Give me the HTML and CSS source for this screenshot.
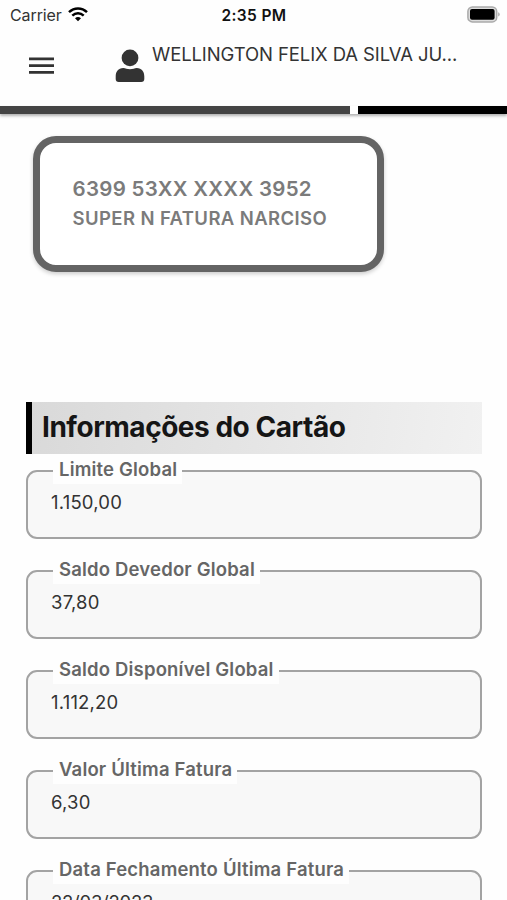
FILE: index.html
```html
<!DOCTYPE html>
<html lang="pt-BR">
<head>
<meta charset="utf-8">
<meta name="viewport" content="width=device-width, initial-scale=1">
<title>Informações do Cartão</title>
<link rel="stylesheet" href="styles.css">
</head>
<body>
<div class="screen">
  <div class="status">
    <div class="carrier"><span>Carrier</span>
      <svg class="wifi" width="20" height="15" viewBox="0 0 20 15" fill="none" stroke="#000" stroke-width="2.5"><path d="M1 5.1C6.2 .2 13.8 .2 19 5.1"/><path d="M4.3 8.6C7.6 5.5 12.4 5.5 15.7 8.6"/><path d="M7 11.2Q10 8.8 13 11.2L10 14.3Z" fill="#000" stroke="none"/></svg>
    </div>
    <div class="clock">2:35 PM</div>
    <svg class="battery" width="33" height="17" viewBox="0 0 33 17"><rect x=".9" y=".9" width="28.8" height="15" rx="4.5" fill="#ddd" stroke="#aaa" stroke-width="1.5"/><rect x="3" y="3" width="24.6" height="10.8" rx="2" fill="#000"/><path d="M31.2 6.3q1.5.6 1.5 2.1t-1.5 2.1z" fill="#aaa"/></svg>
  </div>
  <header class="topbar">
    <svg class="menu" width="25" height="18" viewBox="0 0 25 18" fill="#333"><path d="M0 .5h25v2.7H0zM0 7.3h25V10H0zM0 14.1h25v2.7H0z"/></svg>
    <svg class="user" width="30" height="34" viewBox="0 0 30 34" fill="#333"><circle cx="15" cy="8.9" r="8.4"/><path d="M8.3 19C10.5 19 12 20.3 15 20.3S19.500 19 21.700 19C26.800 19 29.300 22.600 29.300 27.500V30Q29.300 33 26.200 33H3.800Q.7 33 .7 30V27.500C.7 22.600 3.200 19 8.300 19Z"/></svg>
    <span class="name">WELLINGTON FELIX DA SILVA JU...</span>
  </header>
  <div class="tabs"><i class="tab-a"></i><i class="tab-b"></i></div>
  <section class="card">
    <div class="number">6399 53XX XXXX 3952</div>
    <div class="product">SUPER N FATURA NARCISO</div>
  </section>
  <main class="info">
    <h1><span>Informações do Cartão</span></h1>
    <div class="field"><div class="label"><span>Limite Global</span></div><div class="value">1.150,00</div></div>
    <div class="field"><div class="label"><span>Saldo Devedor Global</span></div><div class="value">37,80</div></div>
    <div class="field"><div class="label"><span>Saldo Disponível Global</span></div><div class="value">1.112,20</div></div>
    <div class="field"><div class="label"><span>Valor Última Fatura</span></div><div class="value">6,30</div></div>
    <div class="field"><div class="label"><span>Data Fechamento Última Fatura</span></div><div class="value date">22/03/2023</div></div>
  </main>
</div>
</body>
</html>
```
FILE: styles.css
```css
* { box-sizing: border-box; }
body { margin: 0; background: #fff; font-family: Inter, "Liberation Sans", sans-serif; }
.screen { height: 900px; overflow: hidden; background: #fefefe; }
.status { display: grid; grid-template-columns: 1fr auto 1fr; align-items: center; height: 30px; padding: 0 7px 0 10px; }
.carrier { display: flex; align-items: center; gap: 6px; font-size: 16px; letter-spacing: -.1px; color: #333; }
.wifi { margin-top: -2px; }
.clock { margin-left: -2px; font-size: 15.500px; font-weight: 600; letter-spacing: .35px; color: #111; }
.battery { justify-self: end; margin-top: -2px; }
.topbar { display: flex; height: 76px; align-items: flex-start; }
.menu { margin: 27px 0 0 29px; }
.user { margin: 19px 0 0 61px; }
.name { margin: 12px 0 0 7px; font-size: 18.500px; line-height: 24px; letter-spacing: -.1px; white-space: nowrap; color: #333; }
.tabs { display: flex; gap: 8px; height: 8px; box-shadow: 0 2px 3px rgba(0,0,0,.3); background: #fff; }
.tab-a { width: 350px; background: #444; }
.tab-b { flex: 1; background: #000; }
.card { width: 351px; height: 136px; margin: 22px 0 0 33px; padding: 31px 0 0 32.500px; border: 7px solid #646464; border-radius: 23px; background: #fff; box-shadow: 0 2px 4px rgba(0,0,0,.2); color: #7b7b7b; font-weight: 600; white-space: nowrap; }
.number { font-size: 20.500px; line-height: 30px; letter-spacing: .3px; }
.product { font-size: 18.500px; line-height: 29px; letter-spacing: .4px; }
.info { margin: 130px 25px 0 26px; }
h1 { display: flex; align-items: center; height: 52px; margin: 0; border-left: 6px solid #000; padding: 0 0 3px 10px; background: linear-gradient(100deg, #d9d9d9, #f1f1f1); font-size: 28px; font-weight: 650; letter-spacing: -.47px; color: #151515; }
.field { height: 69px; margin: 16px 0 30.900px; border: 2px solid #a3a3a3; border-radius: 11px; background: #f8f8f8; }
.label { display: flex; height: 24px; margin: -12px 0 0 25px; }
.label span { padding: 0 5px 0 6px; background: #fefefe; font-size: 18.500px; line-height: 18px; height: 24px; font-weight: 600; letter-spacing: .18px; color: #666; white-space: nowrap; }
.value { margin: 6px 0 0 23px; font-size: 18.500px; line-height: 24px; letter-spacing: .2px; color: #333; }
.date { letter-spacing: -.25px; }
```
